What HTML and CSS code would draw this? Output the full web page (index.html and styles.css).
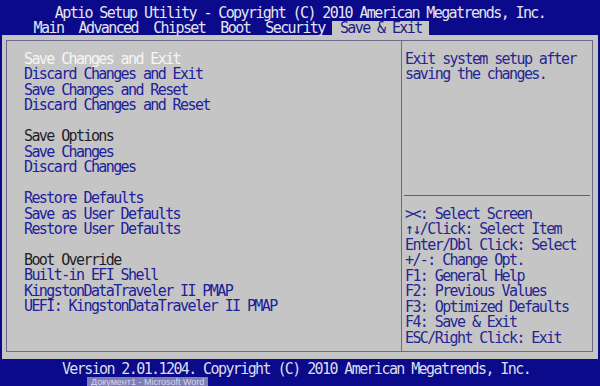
FILE: index.html
```html
<!DOCTYPE html>
<html lang="en">
<head>
  <meta charset="UTF-8" />
  <meta name="viewport" content="width=device-width, initial-scale=1" />
  <title>Aptio Setup Utility</title>
  <link rel="stylesheet" href="styles.css">
</head>
<body>
  <div class="screen">
    <header class="top">
      <div class="title">Aptio Setup Utility - Copyright (C) 2010 American Megatrends, Inc.</div>
      <nav class="tabs">
        <span class="tab">Main</span>
        <span class="tab">Advanced</span>
        <span class="tab">Chipset</span>
        <span class="tab">Boot</span>
        <span class="tab">Security</span>
        <span class="tab active">Save &amp; Exit</span>
      </nav>
    </header>

    <div class="panel">
      <div class="frame">
        <div class="menu">
          <div class="item selected">Save Changes and Exit</div>
          <div class="item">Discard Changes and Exit</div>
          <div class="item">Save Changes and Reset</div>
          <div class="item">Discard Changes and Reset</div>
          <div class="blank"></div>
          <div class="heading">Save Options</div>
          <div class="item">Save Changes</div>
          <div class="item">Discard Changes</div>
          <div class="blank"></div>
          <div class="item">Restore Defaults</div>
          <div class="item">Save as User Defaults</div>
          <div class="item">Restore User Defaults</div>
          <div class="blank"></div>
          <div class="heading">Boot Override</div>
          <div class="item">Built-in EFI Shell</div>
          <div class="item">KingstonDataTraveler II PMAP</div>
          <div class="item">UEFI: KingstonDataTraveler II PMAP</div>
        </div>

        <div class="side">
          <div class="help">
            <div>Exit system setup after</div>
            <div>saving the changes.</div>
          </div>
          <div class="rule"></div>
          <div class="keys">
            <div>&gt;&lt;: Select Screen</div>
            <div>↑↓/Click: Select Item</div>
            <div>Enter/Dbl Click: Select</div>
            <div>+/-: Change Opt.</div>
            <div>F1: General Help</div>
            <div>F2: Previous Values</div>
            <div>F3: Optimized Defaults</div>
            <div>F4: Save &amp; Exit</div>
            <div>ESC/Right Click: Exit</div>
          </div>
        </div>
      </div>
    </div>

    <footer class="bottom">
      <div class="version">Version 2.01.1204. Copyright (C) 2010 American Megatrends, Inc.</div>
      <div class="taskbar-tip">Документ1 - Microsoft Word</div>
    </footer>
  </div>
</body>
</html>
```

FILE: styles.css
```css
body {
  margin: 0;
  background: #0a0a8a;
}
.screen {
  position: relative;
  width: 600px;
  height: 386px;
  overflow: hidden;
  background: #0a0a8a;
  font-family: "DejaVu Sans Mono", monospace;
  font-size: 15px;
  letter-spacing: -1.6px;
  line-height: 15.45px;
  white-space: nowrap;
}
.top {
  height: 35px;
  padding-top: 6px;
  box-sizing: border-box;
  color: #e4e4ee;
}
.title {
  text-align: center;
  line-height: 15px;
}
.tabs {
  display: flex;
  padding-left: 26px;
  line-height: 14px;
}
.tab {
  padding: 0 7.6px;
}
.tab.active {
  background: #c6c6c6;
  color: #1c1c84;
}
.panel {
  margin: 0 2px;
  height: 324px;
  padding: 5px 5px 7px 4px;
  box-sizing: border-box;
  background: #c5c5c5;
}
.frame {
  display: flex;
  height: 100%;
  border: 1px solid #6a6a86;
  box-sizing: border-box;
}
.menu {
  width: 395px;
  padding: 11px 0 0 17px;
  box-sizing: border-box;
  border-right: 1px solid #6a6a86;
  color: #20209a;
}
.item.selected {
  color: #f6f6f6;
}
.heading {
  color: #1e1e28;
}
.blank {
  height: 15.45px;
}
.side {
  flex: 1;
  display: flex;
  flex-direction: column;
  color: #262690;
}
.help {
  flex: 1;
  padding: 11px 3px 0;
}
.rule {
  height: 1px;
  margin: 0 2px;
  background: #5e5e7e;
}
.keys {
  padding: 11px 3px 5px;
}
.bottom {
  height: 27px;
  padding-top: 3px;
  box-sizing: border-box;
  color: #dcdcea;
}
.version {
  text-align: center;
  padding-right: 8px;
}
.taskbar-tip {
  position: absolute;
  left: 87px;
  bottom: 0;
  height: 9px;
  padding: 0 4px;
  background: #7e7eb4;
  color: #d8d8ec;
  font-family: "Liberation Sans", sans-serif;
  font-size: 9px;
  letter-spacing: 0;
  line-height: 10px;
}
```
